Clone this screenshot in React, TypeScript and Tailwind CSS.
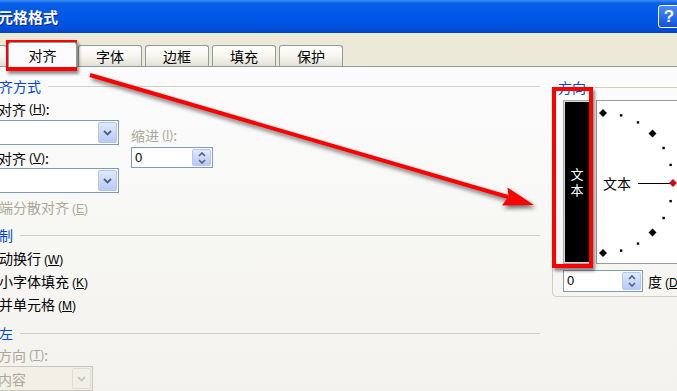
import React from "react";

function Hot({ k }: { k: string }) {
  return (
    <span className="font-['Liberation_Sans',sans-serif] text-[12px] ml-[3px]">
      (<span className="underline">{k}</span>)
    </span>
  );
}

function Chevron({ color }: { color: string }) {
  return (
    <svg width="9" height="6" viewBox="0 0 9 6">
      <path d="M1 1 L4.5 4.5 L8 1" fill="none" stroke={color} strokeWidth="1.8" />
    </svg>
  );
}

function Combo({ className, disabled, text }: { className: string; disabled?: boolean; text?: string }) {
  return (
    <div
      className={
        "flex items-stretch p-[1px] border " +
        (disabled ? "border-[#c9c7ba] bg-[#f2f0e6] " : "border-[#7f9db9] bg-white ") +
        className
      }
    >
      <div className="flex-1 flex items-center -ml-[2px] text-[#aca899] leading-[20px] whitespace-nowrap overflow-hidden">{text}</div>
      {disabled ? (
        <div className="w-[19px] shrink-0 rounded-[2px] bg-[#f0efe8] border border-[#dedccf] flex items-center justify-center">
          <Chevron color="#c9c7ba" />
        </div>
      ) : (
        <div className="w-[19px] shrink-0 rounded-[2px] bg-gradient-to-b from-[#e0e9fe] to-[#b7c9f5] border border-[#b3c6f0] flex items-center justify-center">
          <Chevron color="#4d6185" />
        </div>
      )}
    </div>
  );
}

function Spin({ className }: { className: string }) {
  return (
    <div className={"flex items-stretch p-[1px] border border-[#7f9db9] bg-white shrink-0 " + className}>
      <div className="flex-1 flex items-center pl-[2px] font-['Liberation_Sans',sans-serif] text-[13px]">0</div>
      <div className="w-[19px] shrink-0 rounded-[2px] bg-gradient-to-b from-[#e0e9fe] to-[#b7c9f5] border border-[#b3c6f0] flex flex-col items-center justify-center gap-[2px]">
        <svg width="8" height="5" viewBox="0 0 8 5">
          <path d="M1 4 L4 1 L7 4" fill="none" stroke="#4d6185" strokeWidth="1.6" />
        </svg>
        <svg width="8" height="5" viewBox="0 0 8 5">
          <path d="M1 1 L4 4 L7 1" fill="none" stroke="#4d6185" strokeWidth="1.6" />
        </svg>
      </div>
    </div>
  );
}

function GroupHeader({ label, className }: { label: string; className: string }) {
  return (
    <div className={"h-[20px] flex items-center " + className}>
      <span className="text-[#0046d5] leading-[20px] whitespace-nowrap">{label}</span>
      <div className="flex-1 ml-[7px] h-px bg-[#d0d0bf]" />
    </div>
  );
}

function Check({ label, k, className, disabled }: { label: string; k: string; className: string; disabled?: boolean }) {
  return (
    <div className={"h-[20px] flex items-center pl-[13px] gap-[2px] " + className}>
      <div className={"w-[13px] h-[13px] shrink-0 border " + (disabled ? "border-[#cac8bb] bg-white" : "border-[#1c5180] bg-gradient-to-br from-[#dcdcd7] to-white")} />
      <span className={"leading-[20px] whitespace-nowrap " + (disabled ? "text-[#aca899]" : "text-black")}>
        {label}
        <Hot k={k} />
      </span>
    </div>
  );
}

function Tab({ label, className, selected }: { label: string; className: string; selected?: boolean }) {
  return (
    <div
      className={
        "shrink-0 flex items-center justify-center rounded-t-[3px] border border-[#919b9c] " +
        (selected
          ? "h-[25px] -mb-[1px] border-b-0 bg-[#fcfcfe] z-10 relative "
          : "h-[21px] border-b-0 bg-gradient-to-b from-white via-[#f7f6f1] to-[#e3e0d5] ") +
        className
      }
    >
      <span className="leading-[18px]">{label}</span>
    </div>
  );
}

function Dial() {
  const cx = 6;
  const cy = 82;
  const r = 70;
  const pts = [] as React.ReactNode[];
  for (let i = 0; i <= 12; i++) {
    const a = ((90 - i * 15) * Math.PI) / 180;
    const x = cx + r * Math.cos(a);
    const y = cy - r * Math.sin(a);
    if (i === 6) {
      pts.push(<path key={i} d={`M${x} ${y - 4} L${x + 4} ${y} L${x} ${y + 4} L${x - 4} ${y} Z`} fill="#c81010" />);
    } else if (i % 3 === 0) {
      pts.push(<path key={i} d={`M${x} ${y - 4} L${x + 4} ${y} L${x} ${y + 4} L${x - 4} ${y} Z`} fill="#000" />);
    } else {
      pts.push(<rect key={i} x={x - 1.2} y={y - 1.2} width="2.4" height="2.4" fill="#000" />);
    }
  }
  return (
    <div className="relative w-[140px] shrink-0 h-full border border-[#9c9c9c] border-r-0 bg-white">
      <svg className="absolute left-0 top-0" width="139" height="162" viewBox="0 0 139 162">
        <line x1="41" y1="82.5" x2="73" y2="82.5" stroke="#000" strokeWidth="1" />
        {pts}
      </svg>
      <span className="absolute left-[6px] top-[73px] leading-[18px] text-[14px]">文本</span>
    </div>
  );
}

export default function App() {
  return (
    <div className="relative w-[677px] h-[391px] overflow-hidden flex flex-col bg-[#ece9d8] font-['Noto_Sans_CJK_SC',sans-serif] text-[14px] text-black">
      {/* Title bar */}
      <div className="h-[33px] shrink-0 flex items-center justify-between bg-[linear-gradient(to_bottom,#3b8cf5_0%,#0a5fe8_10%,#0058e8_45%,#0052de_80%,#0046c6_100%)]">
        <span className="-ml-[17px] text-white font-bold text-[15px] leading-[20px] whitespace-nowrap [text-shadow:1px_1px_0_#0a2a8a]">
          单元格格式
        </span>
        <div className="w-[22px] h-[23px] mr-[-3px] rounded-[3px] border border-white bg-gradient-to-b from-[#4a8af8] to-[#1050dc] flex items-center justify-center">
          <span className="text-white font-bold text-[17px] leading-none font-['Liberation_Sans',sans-serif]">?</span>
        </div>
      </div>

      {/* Tab strip */}
      <div className="h-[33px] shrink-0 flex items-end bg-[#ece9d8]">
        <Tab label="数字" className="w-[64px] -ml-[57px]" />
        <Tab label="对齐" className="w-[69px] ml-[1px]" selected />
        <Tab label="字体" className="w-[64px] ml-[1px]" />
        <Tab label="边框" className="w-[64px] ml-[3px]" />
        <Tab label="填充" className="w-[64px] ml-[3px]" />
        <Tab label="保护" className="w-[64px] ml-[3px]" />
      </div>

      {/* Content */}
      <div className="flex-1 flex border-t border-[#919b9c] bg-[linear-gradient(to_bottom,#fcfcfe_0%,#f8f8f6_40%,#f3f2ed_100%)]">
        {/* Left column */}
        <div className="flex flex-col -ml-[43px] w-[583px] shrink-0 pt-[9px]">
          <GroupHeader label="文本对齐方式" className="" />
          <div className="flex mt-[3px]">
            <div className="flex flex-col pl-[13px] w-[162px] shrink-0">
              <div className="h-[20px] flex items-center whitespace-nowrap">
                水平对齐<Hot k="H" />:
              </div>
              <Combo className="mt-[1px] h-[25px] w-[149px]" />
              <div className="h-[20px] mt-[3px] flex items-center whitespace-nowrap">
                垂直对齐<Hot k="V" />:
              </div>
              <Combo className="h-[25px] w-[149px]" />
            </div>
            <div className="flex flex-col ml-[12px] pt-[26px]">
              <div className="h-[20px] flex items-center whitespace-nowrap text-[#aca899]">
                缩进<Hot k="I" />:
              </div>
              <Spin className="mt-[2px] w-[82px] h-[21px]" />
            </div>
          </div>
          <Check label="两端分散对齐" k="E" className="mt-[5px]" disabled />
          <GroupHeader label="文本控制" className="mt-[7px]" />
          <Check label="自动换行" k="W" className="mt-[4px]" />
          <Check label="缩小字体填充" k="K" className="mt-[3px]" />
          <Check label="合并单元格" k="M" className="mt-[3px]" />
          <GroupHeader label="从右到左" className="mt-[8px]" />
          <div className="h-[20px] mt-[2px] pl-[13px] flex items-center whitespace-nowrap text-[#aca899]">
            文字方向<Hot k="T" />:
          </div>
          <div className="pl-[13px] mt-[1px]">
            <Combo className="h-[25px] w-[123px]" disabled text="根据内容" />
          </div>
        </div>

        {/* Right column */}
        <fieldset className="ml-[12px] mt-[11px] self-start w-[200px] shrink-0 min-w-0 border border-[#d0d0bf] rounded-[4px]">
          <legend className="ml-[4px] px-[1px] text-[#0046d5] leading-[18px]">方向</legend>
          <div className="pt-[4px] pl-[10px] pb-[4px]">
            <div className="flex gap-[5px] h-[164px]">
              <div className="w-[28px] shrink-0 h-full border border-[#a6a6a6] p-[1px] bg-[#d8d8d8]">
                <div className="w-full h-full bg-black flex flex-col items-center justify-center text-white text-[13px] leading-[16px]">
                  <span>文</span>
                  <span>本</span>
                </div>
              </div>
              <Dial />
            </div>
            <div className="flex items-center mt-[6px] h-[22px]">
              <Spin className="w-[80px] h-[22px]" />
              <span className="ml-[5px] whitespace-nowrap">
                度<Hot k="D" />
              </span>
            </div>
          </div>
        </fieldset>
      </div>

      {/* Annotation overlays */}
      <div className="absolute left-[6px] top-[40px] w-[71px] h-[31px] border-4 border-[#ff0000] shadow-[2px_3px_3px_rgba(0,0,0,0.45)] pointer-events-none" />
      <div className="absolute left-[552px] top-[87px] w-[41px] h-[181px] border-4 border-[#ff0000] shadow-[2px_3px_3px_rgba(0,0,0,0.45)] pointer-events-none" />
      <svg
        className="absolute left-0 top-0 pointer-events-none drop-shadow-[2px_3px_2px_rgba(0,0,0,0.55)]"
        width="677"
        height="391"
        viewBox="0 0 677 391"
      >
        <line x1="90" y1="75" x2="508" y2="197" stroke="#ff0000" strokeWidth="4" />
        <path d="M534 205 L502 205.5 L508.5 196.5 L507.5 187.5 Z" fill="#ff0000" />
      </svg>
    </div>
  );
}
